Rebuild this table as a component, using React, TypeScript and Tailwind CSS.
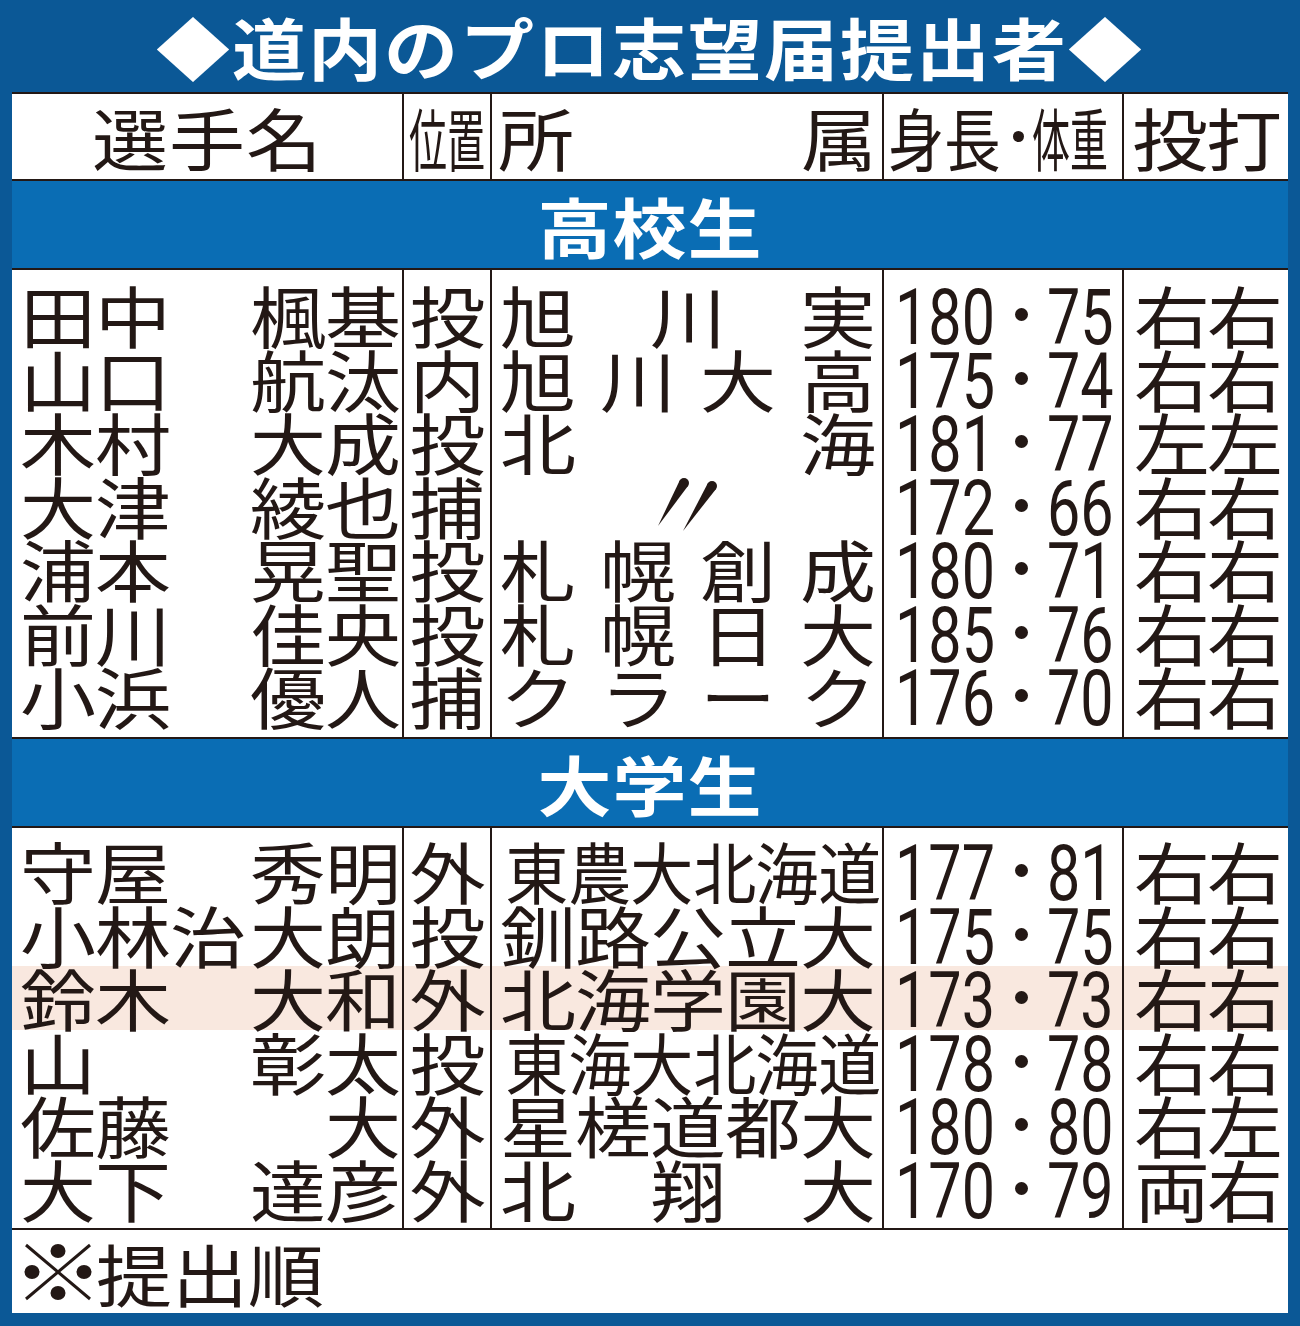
import React from "react";

type HS = {
  sei: string;
  mei: string;
  pos: string;
  school: string[] | null;
  wide?: boolean;
  hw: string;
  wt: string;
  th: string;
  hl?: boolean;
};

const highSchool: HS[] = [
  { sei: "田中", mei: "楓基", pos: "投", school: ["旭", "川", "実"], hw: "180", wt: "75", th: "右右" },
  { sei: "山口", mei: "航汰", pos: "内", school: ["旭", "川", "大", "高"], hw: "175", wt: "74", th: "右右" },
  { sei: "木村", mei: "大成", pos: "投", school: ["北", "海"], hw: "181", wt: "77", th: "左左" },
  { sei: "大津", mei: "綾也", pos: "捕", school: null, hw: "172", wt: "66", th: "右右" },
  { sei: "浦本", mei: "晃聖", pos: "投", school: ["札", "幌", "創", "成"], hw: "180", wt: "71", th: "右右" },
  { sei: "前川", mei: "佳央", pos: "投", school: ["札", "幌", "日", "大"], hw: "185", wt: "76", th: "右右" },
  { sei: "小浜", mei: "優人", pos: "捕", school: ["ク", "ラ", "ー", "ク"], hw: "176", wt: "70", th: "右右" },
];

const university: HS[] = [
  { sei: "守屋", mei: "秀明", pos: "外", school: ["東", "農", "大", "北", "海", "道"], wide: true, hw: "177", wt: "81", th: "右右" },
  { sei: "小林治", mei: "大朗", pos: "投", school: ["釧", "路", "公", "立", "大"], hw: "175", wt: "75", th: "右右" },
  { sei: "鈴木", mei: "大和", pos: "外", school: ["北", "海", "学", "園", "大"], hw: "173", wt: "73", th: "右右", hl: true },
  { sei: "山", mei: "彰太", pos: "投", school: ["東", "海", "大", "北", "海", "道"], wide: true, hw: "178", wt: "78", th: "右右" },
  { sei: "佐藤", mei: "大", pos: "外", school: ["星", "槎", "道", "都", "大"], hw: "180", wt: "80", th: "右左" },
  { sei: "大下", mei: "達彦", pos: "外", school: ["北", "翔", "大"], hw: "170", wt: "79", th: "両右" },
];

function C({ ch }: { ch: string }) {
  return <span className="inline-block w-[75px] text-center scale-y-[0.88]">{ch}</span>;
}

function CN({ ch }: { ch: string }) {
  return <span className="inline-block w-[62.5px] text-center scale-x-[0.83] scale-y-[0.88]">{ch}</span>;
}

function Ditto() {
  return (
    <svg width="70" height="60" viewBox="0 0 70 60" className="block">
      <circle cx="31" cy="8" r="5" fill="#231815" />
      <polygon points="35.3,10.6 5,51 26.7,5.4" fill="#231815" />
      <circle cx="59" cy="11" r="5" fill="#231815" />
      <polygon points="63.2,13.7 30,56 54.8,8.3" fill="#231815" />
    </svg>
  );
}

function Kome() {
  return (
    <span className="inline-flex w-[76px] justify-center items-center">
      <svg width="70" height="58" viewBox="0 0 70 58" className="block">
        <line x1="3" y1="2" x2="67" y2="56" stroke="#231815" strokeWidth="3" />
        <line x1="67" y1="2" x2="3" y2="56" stroke="#231815" strokeWidth="3" />
        <ellipse cx="35" cy="8" rx="7.5" ry="7" fill="#231815" />
        <ellipse cx="35" cy="50" rx="7.5" ry="7" fill="#231815" />
        <ellipse cx="9" cy="29" rx="7.5" ry="7" fill="#231815" />
        <ellipse cx="61" cy="29" rx="7.5" ry="7" fill="#231815" />
      </svg>
    </span>
  );
}

function Num({ v, wide }: { v: string; wide?: boolean }) {
  return (
    <span className={wide ? "inline-block w-[100px]" : "inline-block w-[67px]"}>
      <span className="inline-block origin-left scale-x-[0.77] font-['Roboto',sans-serif]">{v}</span>
    </span>
  );
}

function Dot() {
  return (
    <span className="inline-flex w-[52px] justify-center">
      <span className="block w-[13px] h-[13px] rounded-full bg-[#231815]" />
    </span>
  );
}

function Block({ rows, pad }: { rows: HS[]; pad: string }) {
  const cell = (r: HS) => (r.hl ? "h-[63.5px] bg-[#f9e8df]" : "h-[63.5px]");
  return (
    <div className="grid grid-cols-[390px_88px_392px_240px_166px] border-y-2 border-[#231815] text-[76px] leading-[63.5px]">
      <div className={pad}>
        {rows.map((r, i) => (
          <div key={i} className={cell(r) + " flex justify-between pl-[8px] pr-[2px]"}>
            <span className="flex">
              {r.sei.split("").map((c, j) => (
                <C key={j} ch={c} />
              ))}
            </span>
            <span className="flex">
              {r.mei.split("").map((c, j) => (
                <C key={j} ch={c} />
              ))}
            </span>
          </div>
        ))}
      </div>
      <div className={pad + " border-l-2 border-[#231815]"}>
        {rows.map((r, i) => (
          <div key={i} className={cell(r) + " flex justify-center"}>
            <C ch={r.pos} />
          </div>
        ))}
      </div>
      <div className={pad + " border-l-2 border-[#231815]"}>
        {rows.map((r, i) => (
          <div key={i} className={cell(r) + " flex justify-between items-center pl-[8px] pr-[7px]"}>
            {r.school === null ? (
              <div className="w-full flex justify-center">
                <Ditto />
              </div>
            ) : r.wide ? (
              r.school.map((c, j) => <CN key={j} ch={c} />)
            ) : (
              r.school.map((c, j) => <C key={j} ch={c} />)
            )}
          </div>
        ))}
      </div>
      <div className={pad + " border-l-2 border-[#231815]"}>
        {rows.map((r, i) => (
          <div key={i} className={cell(r) + " flex items-center pl-[11px] text-[77px]"}>
            <Num v={r.hw} wide />
            <Dot />
            <Num v={r.wt} />
          </div>
        ))}
      </div>
      <div className={pad + " border-l-2 border-[#231815]"}>
        {rows.map((r, i) => (
          <div key={i} className={cell(r) + " flex justify-center pl-[2px]"}>
            {r.th.split("").map((c, j) => (
              <span key={j} className="inline-block w-[73px] text-center scale-y-[0.88]">
                {c}
              </span>
            ))}
          </div>
        ))}
      </div>
    </div>
  );
}

function Band({ text }: { text: string }) {
  return (
    <div className="h-[87px] bg-[#0a6db4] flex items-center justify-center text-white font-bold text-[74px] leading-none tracking-[1px]">
      <span className="inline-block scale-y-[0.88]">{text}</span>
    </div>
  );
}

export default function App() {
  return (
    <div className="w-[1300px] h-[1326px] bg-[#0b5896] px-[12px] pb-[13px] flex flex-col font-['Noto_Sans_CJK_JP',sans-serif] text-[#231815]">
      <div className="h-[92px] shrink-0 flex items-center justify-center text-white font-bold text-[74px] leading-none tracking-[2px]">
        <span className="inline-block scale-y-[0.9]">◆道内のプロ志望届提出者◆</span>
      </div>
      <div className="flex-1 bg-white flex flex-col">
        <div className="h-[89px] shrink-0 grid grid-cols-[390px_88px_392px_240px_166px] border-y-2 border-[#231815] text-[76px] leading-[85px]">
          <div className="flex justify-center">
            {"選手名".split("").map((c, j) => (
              <span key={j} className="inline-block w-[77px] text-center scale-y-[0.9]">
                {c}
              </span>
            ))}
          </div>
          <div className="border-l-2 border-[#231815] flex justify-center">
            <span className="inline-block w-[152px] -mx-[38px] scale-x-[0.5] scale-y-[0.9] whitespace-nowrap">位置</span>
          </div>
          <div className="border-l-2 border-[#231815] flex justify-between pl-[6px] pr-[6px]">
            <span className="inline-block w-[75px] text-center scale-y-[0.9]">所</span>
            <span className="inline-block w-[75px] text-center scale-y-[0.9]">属</span>
          </div>
          <div className="border-l-2 border-[#231815] flex items-center pl-[4px] whitespace-nowrap">
            <span className="inline-block w-[116px]">
              <span className="inline-block origin-left scale-x-[0.74] scale-y-[0.9]">身長</span>
            </span>
            <span className="inline-flex w-[28px] justify-center">
              <span className="block w-[11px] h-[11px] rounded-full bg-[#231815]" />
            </span>
            <span className="inline-block w-[76px]">
              <span className="inline-block origin-left scale-x-[0.5] scale-y-[0.9]">体重</span>
            </span>
          </div>
          <div className="border-l-2 border-[#231815] flex justify-center">
            {"投打".split("").map((c, j) => (
              <span key={j} className="inline-block w-[74px] text-center scale-y-[0.9]">
                {c}
              </span>
            ))}
          </div>
        </div>
        <Band text="高校生" />
        <Block rows={highSchool} pad="pt-[13px] pb-[9.5px]" />
        <Band text="大学生" />
        <Block rows={university} pad="pt-[11px] pb-[8px]" />
        <div className="flex-1 flex items-center pl-[8px] text-[76px] leading-none">
          <Kome />
          {"提出順".split("").map((c, j) => (
            <span key={j} className="inline-block w-[76px] text-center scale-y-[0.9]">
              {c}
            </span>
          ))}
        </div>
      </div>
    </div>
  );
}
